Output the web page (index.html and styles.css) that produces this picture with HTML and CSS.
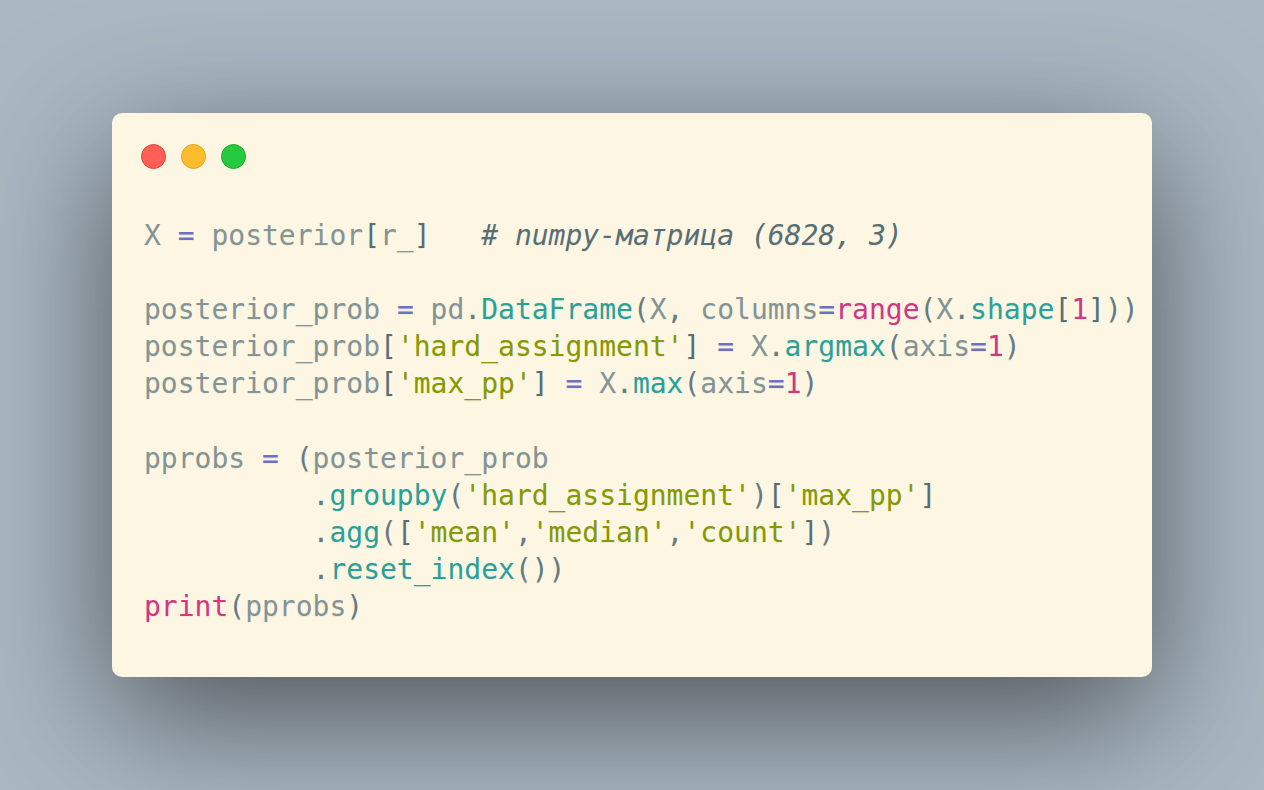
FILE: index.html
```html
<!DOCTYPE html>
<html>
<head>
<meta charset="utf-8">
<link rel="stylesheet" href="styles.css">
</head>
<body>
<div class="stage">
  <div class="window">
    <div class="controls">
      <span class="dot red"></span>
      <span class="dot yellow"></span>
      <span class="dot green"></span>
    </div>
<pre class="code"><span class="v">X</span> <span class="o">=</span> <span class="v">posterior</span><span class="k">[</span><span class="v">r_</span><span class="k">]</span>   <span class="c"># numpy-матрица (6828, 3)</span>

<span class="v">posterior_prob</span> <span class="o">=</span> <span class="v">pd</span><span class="t">.</span><span class="p">DataFrame</span><span class="t">(</span><span class="v">X</span><span class="t">,</span> <span class="v">columns</span><span class="o">=</span><span class="b">range</span><span class="t">(</span><span class="v">X</span><span class="t">.</span><span class="p">shape</span><span class="k">[</span><span class="n">1</span><span class="k">]</span><span class="t">))</span>
<span class="v">posterior_prob</span><span class="k">[</span><span class="s">'hard_assignment'</span><span class="k">]</span> <span class="o">=</span> <span class="v">X</span><span class="t">.</span><span class="p">argmax</span><span class="t">(</span><span class="v">axis</span><span class="o">=</span><span class="n">1</span><span class="t">)</span>
<span class="v">posterior_prob</span><span class="k">[</span><span class="s">'max_pp'</span><span class="k">]</span> <span class="o">=</span> <span class="v">X</span><span class="t">.</span><span class="p">max</span><span class="t">(</span><span class="v">axis</span><span class="o">=</span><span class="n">1</span><span class="t">)</span>

<span class="v">pprobs</span> <span class="o">=</span> <span class="t">(</span><span class="v">posterior_prob</span>
          <span class="t">.</span><span class="p">groupby</span><span class="t">(</span><span class="s">'hard_assignment'</span><span class="t">)</span><span class="k">[</span><span class="s">'max_pp'</span><span class="k">]</span>
          <span class="t">.</span><span class="p">agg</span><span class="t">(</span><span class="k">[</span><span class="s">'mean'</span><span class="t">,</span><span class="s">'median'</span><span class="t">,</span><span class="s">'count'</span><span class="k">]</span><span class="t">)</span>
          <span class="t">.</span><span class="p">reset_index</span><span class="t">())</span>
<span class="b">print</span><span class="t">(</span><span class="v">pprobs</span><span class="t">)</span></pre>
  </div>
</div>
</body>
</html>
```

FILE: styles.css
```css
html, body {
  margin: 0;
  padding: 0;
  background: #abb8c3;
}

.stage {
  width: 1264px;
  height: 790px;
  box-sizing: border-box;
  padding: 113px 112px 113px 112px;
  display: flex;
  align-items: flex-start;
}

.window {
  width: 1040px;
  height: 564px;
  box-sizing: border-box;
  background: #fdf6e3;
  border-radius: 10px;
  box-shadow: 0 40px 136px rgba(0, 0, 0, 0.55);
  padding: 31px 33px 0 29px;
}

.controls {
  display: flex;
  gap: 15px;
  height: 25px;
}

.dot {
  width: 25px;
  height: 25px;
  border-radius: 50%;
  box-sizing: border-box;
  border: 1px solid;
}

.red { background: #ff5f56; border-color: #e0443e; }
.yellow { background: #ffbd2e; border-color: #dea123; }
.green { background: #27c93f; border-color: #1aab29; }

.code {
  margin: 48px 0 0 3px;
  font-family: "DejaVu Sans Mono", monospace;
  font-size: 28px;
  line-height: 37.1px;
  color: #657b83;
  text-shadow: 0 1px 0 rgba(238, 232, 213, 0.8);
  white-space: pre;
}

.v { color: #839496; }
.o { color: #6c71c4; }
.p { color: #2aa198; }
.b { color: #d33682; }
.n { color: #d33682; }
.s { color: #859900; }
.c { color: #586e75; font-style: italic; }
.k { color: #586e75; }
.t { color: #657b83; }
```
